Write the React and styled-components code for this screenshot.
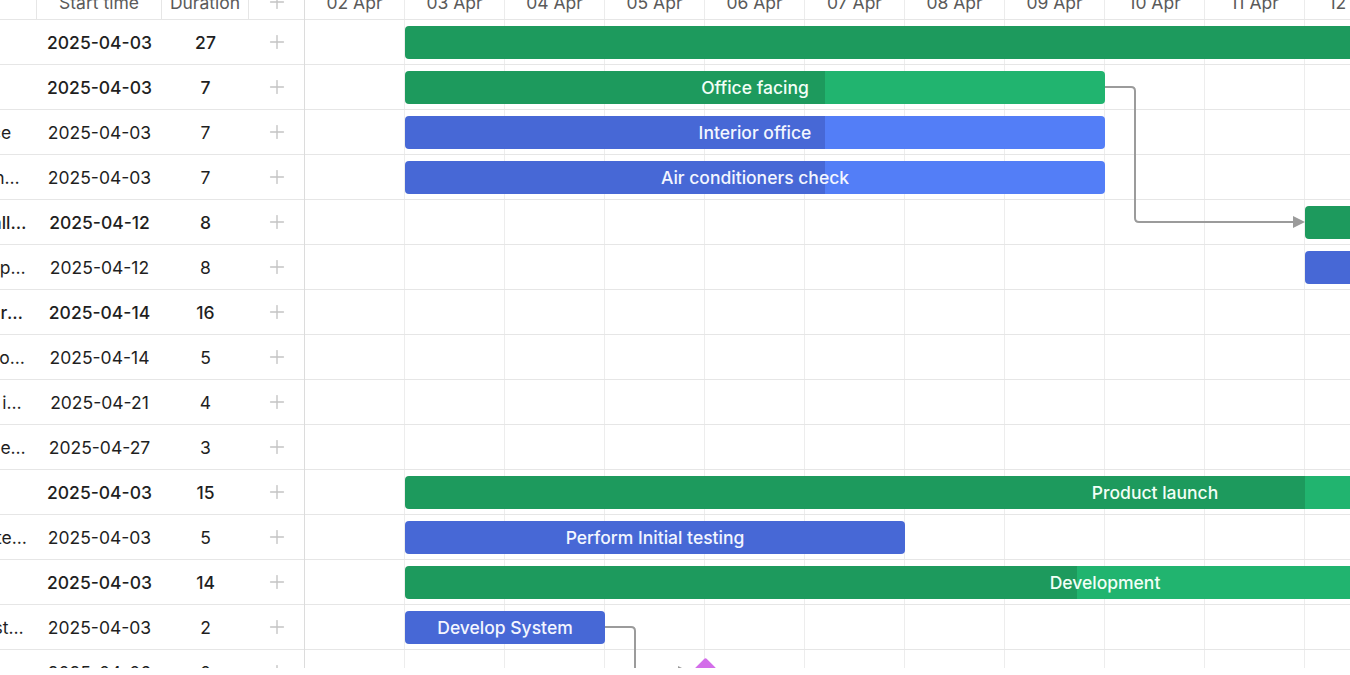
import React from 'react';
import styled, { createGlobalStyle } from 'styled-components';
import { Plus, ChevronDown } from 'lucide-react';

const DAY = 100;
const ROW = 45;
const ORIGIN = 2; // first column is 02 Apr

const GlobalStyle = createGlobalStyle`
  body {
    margin: 0;
    background: #fff;
    font-family: Inter, "Noto Sans", sans-serif;
    overflow: hidden;
  }
`;

const palette = {
  green: { done: '#1d9a5d', rest: '#21b46f', text: '#f2fff7' },
  blue: { done: '#4768d6', rest: '#537ef7', text: '#f3f6ff' },
};

const tasks = [
  { name: 'Office itinerancy', level: 0, parent: true, start: '2025-04-03', duration: 27, color: 'green', progress: 0.8 },
  { name: 'Office facing', level: 1, parent: true, start: '2025-04-03', duration: 7, color: 'green', progress: 0.6 },
  { name: 'Interior office', level: 2, start: '2025-04-03', duration: 7, color: 'blue', progress: 0.6 },
  { name: 'Air conditioners check', level: 2, start: '2025-04-03', duration: 7, color: 'blue', progress: 0.6 },
  { name: 'Furniture: installation', level: 1, parent: true, start: '2025-04-12', duration: 8, color: 'green', progress: 0.5 },
  { name: 'Office desk power supply', level: 2, start: '2025-04-12', duration: 8, color: 'blue', progress: 0.5 },
  { name: 'Team member recruitment', level: 1, parent: true, start: '2025-04-14', duration: 16, color: 'green', progress: 0.3 },
  { name: 'Set up job postings', level: 2, start: '2025-04-14', duration: 5, color: 'blue', progress: 0.4 },
  { name: 'Onboarding introduction', level: 2, start: '2025-04-21', duration: 4, color: 'blue', progress: 0.2 },
  { name: 'Team lunch event', level: 2, start: '2025-04-27', duration: 3, color: 'blue', progress: 0 },
  { name: 'Product launch', level: 0, parent: true, start: '2025-04-03', duration: 15, color: 'green', progress: 0.6 },
  { name: 'Perform Initial testing', level: 1, start: '2025-04-03', duration: 5, color: 'blue', progress: 1 },
  { name: 'Development', level: 1, parent: true, start: '2025-04-03', duration: 14, color: 'green', progress: 0.48 },
  { name: 'Develop System', level: 2, start: '2025-04-03', duration: 2, color: 'blue', progress: 1 },
  { name: 'Beta release', level: 2, start: '2025-04-06', duration: 0, milestone: true },
];

const days = Array.from({ length: 29 }, (_, i) => `${String(i + ORIGIN).padStart(2, '0')} Apr`);

const dayOffset = (date) => Number(date.slice(8)) - ORIGIN;

const Viewport = styled.div`
  height: 668px;
  overflow: hidden;
  background: #fff;
`;

const Sheet = styled.div`
  display: flex;
  margin-top: -15px;
  color: #1f1f1f;
  font-size: 17.5px;
`;

const Table = styled.div`
  flex: none;
  margin-left: -178px;
  border-right: 1px solid #dcdcdc;
`;

const TableRow = styled.div`
  display: grid;
  grid-template-columns: 215px 125px 87px 55px;
  height: ${({ $head }) => ($head ? 35 : ROW)}px;
  box-sizing: border-box;
  border-bottom: 1px solid #e6e6e6;
  color: ${({ $head }) => ($head ? '#5a5a5a' : '#1f1f1f')};
  font-weight: ${({ $bold }) => ($bold ? 500 : 400)};
`;

const Cell = styled.div`
  display: flex;
  align-items: center;
  justify-content: center;
  min-width: 0;
  border-right: ${({ $divider }) => ($divider ? '1px solid #e6e6e6' : 'none')};
  color: ${({ $muted }) => ($muted ? '#c4c4c4' : 'inherit')};
`;

const NameCell = styled.div`
  display: flex;
  align-items: center;
  gap: 6px;
  min-width: 0;
  padding-left: ${({ $level }) => 8 + $level * 24}px;
  padding-right: 8px;
  border-right: ${({ $divider }) => ($divider ? '1px solid #e6e6e6' : 'none')};

  .toggle {
    flex: none;
    width: 16px;
    color: #7a7a7a;
  }

  .label {
    overflow: hidden;
    white-space: nowrap;
    text-overflow: ellipsis;
  }
`;

const Timeline = styled.div`
  flex: 1;
  min-width: 0;
  overflow: hidden;
`;

const Scale = styled.div`
  display: flex;
  height: 35px;
  width: ${days.length * DAY}px;
  box-sizing: border-box;
  border-bottom: 1px solid #e6e6e6;
`;

const DayCell = styled.div`
  flex: none;
  width: ${DAY}px;
  box-sizing: border-box;
  border-right: 1px solid #ececec;
  display: flex;
  align-items: center;
  justify-content: center;
  color: #5a5a5a;
  white-space: nowrap;
`;

const Chart = styled.div`
  position: relative;
  width: ${days.length * DAY}px;
  background-image: linear-gradient(to right, #ededed 1px, transparent 1px);
  background-size: ${DAY}px 100%;
  background-position: -1px 0;
`;

const Lane = styled.div`
  display: flex;
  align-items: center;
  height: ${ROW}px;
  box-sizing: border-box;
  border-bottom: 1px solid #e6e6e6;
`;

const Bar = styled.div`
  flex: none;
  height: 33px;
  border-radius: 4px;
  display: flex;
  align-items: center;
  justify-content: center;
  white-space: nowrap;
  font-weight: 500;
  color: ${({ $tone }) => palette[$tone].text};
  background: ${({ $tone, $progress }) => {
    const c = palette[$tone];
    const p = Math.round($progress * 1000) / 10;
    return `linear-gradient(to right, ${c.done} ${p}%, ${c.rest} ${p}%)`;
  }};
`;

const Milestone = styled.div`
  flex: none;
  width: 21px;
  height: 21px;
  border-radius: 2px;
  background: #d36ee9;
  transform: rotate(45deg);
`;

const Links = styled.svg`
  position: absolute;
  left: 0;
  top: 0;
  pointer-events: none;
  overflow: visible;
`;

// elbow link: out to the right of the source bar, down, then across to the target
const linkPath = (x1, y1, x2, y2, out = 30, r = 4) =>
  `M${x1} ${y1} H${x1 + out - r} Q${x1 + out} ${y1} ${x1 + out} ${y1 + r} V${y2 - r} Q${x1 + out} ${y2} ${x1 + out + r} ${y2} H${x2 - 10}`;

const Arrow = ({ from, to }) => {
  const [x2, y2] = to;
  return (
    <g>
      <path d={linkPath(from[0], from[1], x2, y2)} fill="none" stroke="#9b9b9b" strokeWidth="2" />
      <polygon points={`${x2 - 12},${y2 - 6} ${x2},${y2} ${x2 - 12},${y2 + 6}`} fill="#9b9b9b" />
    </g>
  );
};

const rowMid = (i) => i * ROW + (ROW - 1) / 2;

const App = () => {
  return (
    <>
      <GlobalStyle />
      <Viewport>
        <Sheet>
          <Table>
            <TableRow $head>
              <NameCell $level={0} $divider>
                <span className="label">Task name</span>
              </NameCell>
              <Cell $divider>Start time</Cell>
              <Cell $divider>Duration</Cell>
              <Cell $muted>
                <Plus size={22} strokeWidth={1.5} />
              </Cell>
            </TableRow>
            {tasks.map((t) => (
              <TableRow key={t.name} $bold={t.parent}>
                <NameCell $level={t.level}>
                  <span className="toggle">{t.parent && <ChevronDown size={16} />}</span>
                  <span className="label">{t.name}</span>
                </NameCell>
                <Cell>{t.start}</Cell>
                <Cell>{t.duration}</Cell>
                <Cell $muted>
                  <Plus size={22} strokeWidth={1.5} />
                </Cell>
              </TableRow>
            ))}
          </Table>

          <Timeline>
            <Scale>
              {days.map((d) => (
                <DayCell key={d}>{d}</DayCell>
              ))}
            </Scale>
            <Chart>
              {tasks.map((t) => {
                const x = dayOffset(t.start) * DAY;
                return (
                  <Lane key={t.name}>
                    {t.milestone ? (
                      <Milestone style={{ marginLeft: x - 10.5 }} />
                    ) : (
                      <Bar
                        $tone={t.color}
                        $progress={t.progress}
                        style={{ marginLeft: x, width: t.duration * DAY }}
                      >
                        {t.name}
                      </Bar>
                    )}
                  </Lane>
                );
              })}
              <Links width="1" height="1">
                <Arrow from={[800, rowMid(1)]} to={[1000, rowMid(4)]} />
                <Arrow from={[300, rowMid(13)]} to={[385, rowMid(14)]} />
              </Links>
            </Chart>
          </Timeline>
        </Sheet>
      </Viewport>
    </>
  );
};

export default App;
